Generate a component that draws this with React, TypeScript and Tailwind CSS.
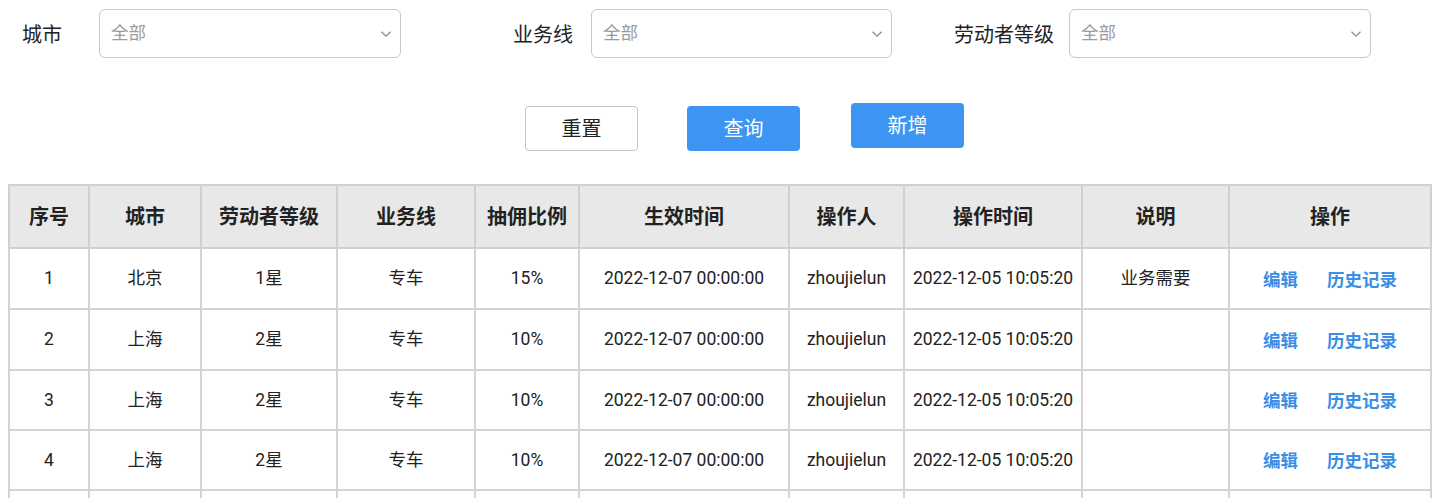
import React from 'react';

const font = { fontFamily: 'Roboto, "Noto Sans CJK SC", sans-serif' };

const filters = [
  { label: '城市', labelClass: 'ml-[22px] w-[77px]', selectClass: 'w-[302px]' },
  { label: '业务线', labelClass: 'ml-[112px] w-[78px]', selectClass: 'w-[301px]' },
  { label: '劳动者等级', labelClass: 'ml-[62px] w-[115px]', selectClass: 'w-[302px]' },
];

const columns = [
  { title: '序号', w: 'w-[80px]' },
  { title: '城市', w: 'w-[112px]' },
  { title: '劳动者等级', w: 'w-[136px]' },
  { title: '业务线', w: 'w-[138px]' },
  { title: '抽佣比例', w: 'w-[104px]' },
  { title: '生效时间', w: 'w-[210px]' },
  { title: '操作人', w: 'w-[115px]' },
  { title: '操作时间', w: 'w-[178px]' },
  { title: '说明', w: 'w-[147px]' },
  { title: '操作', w: 'w-[202px]' },
];

const rows = [
  { id: 1, city: '北京', level: '1星', line: '专车', rate: '15%', note: '业务需要', h: 'h-[61px]' },
  { id: 2, city: '上海', level: '2星', line: '专车', rate: '10%', note: '', h: 'h-[61px]' },
  { id: 3, city: '上海', level: '2星', line: '专车', rate: '10%', note: '', h: 'h-[60px]' },
  { id: 4, city: '上海', level: '2星', line: '专车', rate: '10%', note: '', h: 'h-[60px]' },
];

const cell = 'border-2 border-[#d4d4d4]';

function ChevronDown() {
  return (
    <svg width="12" height="8" viewBox="0 0 12 8" fill="none">
      <path d="M1.5 1.8L6 6.2L10.5 1.8" stroke="#888" strokeWidth="1.2" />
    </svg>
  );
}

export default function App() {
  return (
    <div className="bg-white w-[1434px] h-[498px] overflow-hidden text-[#222]" style={font}>
      {/* filter bar */}
      <div className="flex items-center pt-[9px]">
        {filters.map((f) => (
          <React.Fragment key={f.label}>
            <span className={`${f.labelClass} text-[20px] text-[#222] shrink-0 mt-[3px]`}>{f.label}</span>
            <div
              className={`${f.selectClass} h-[49px] border border-[#c8c8c8] rounded-[6px] flex items-center justify-between pl-[11px] pr-[8px] shrink-0`}
            >
              <span className="text-[17.5px] text-[#9a9a9a] -mt-[1px]">全部</span>
              <ChevronDown />
            </div>
          </React.Fragment>
        ))}
      </div>

      {/* buttons */}
      <div className="flex items-start ml-[525px] mt-[45px] h-[48px]">
        <button className="w-[113px] h-[45px] mt-[3px] border border-[#c4c4c4] rounded-[4px] bg-white text-[20px] text-[#222]">
          重置
        </button>
        <button className="w-[113px] h-[45px] mt-[3px] ml-[49px] rounded-[4px] bg-[#3d95f3] text-[20px] text-white">
          查询
        </button>
        <button className="w-[113px] h-[45px] ml-[51px] rounded-[4px] bg-[#3d95f3] text-[20px] text-white">
          新增
        </button>
      </div>

      {/* table */}
      <table className="ml-[8px] mt-[33px] border-collapse table-fixed w-[1422px]">
        <thead>
          <tr className="h-[63px] bg-[#e8e8e8]">
            {columns.map((c) => (
              <th key={c.title} className={`${c.w} border-2 border-[#cfcfcf] text-[20px] font-bold text-[#222] text-center`}>
                {c.title}
              </th>
            ))}
          </tr>
        </thead>
        <tbody>
          {rows.map((r) => (
            <tr key={r.id} className={`${r.h} text-[17.5px] text-[#222] text-center`}>
              <td className={cell}>{r.id}</td>
              <td className={cell}>{r.city}</td>
              <td className={cell}>{r.level}</td>
              <td className={cell}>{r.line}</td>
              <td className={cell}>{r.rate}</td>
              <td className={cell}>2022-12-07 00:00:00</td>
              <td className={cell}>zhoujielun</td>
              <td className={cell}>2022-12-05 10:05:20</td>
              <td className={cell}>{r.note}</td>
              <td className={cell}>
                <div className="flex justify-center gap-[29px] pt-[3px] text-[#3a8ee6] font-bold">
                  <a href="#">编辑</a>
                  <a href="#">历史记录</a>
                </div>
              </td>
            </tr>
          ))}
          {/* next row, cut off by the window */}
          <tr className="h-[60px]">
            {columns.map((c) => (
              <td key={c.title} className={cell} />
            ))}
          </tr>
        </tbody>
      </table>
    </div>
  );
}
